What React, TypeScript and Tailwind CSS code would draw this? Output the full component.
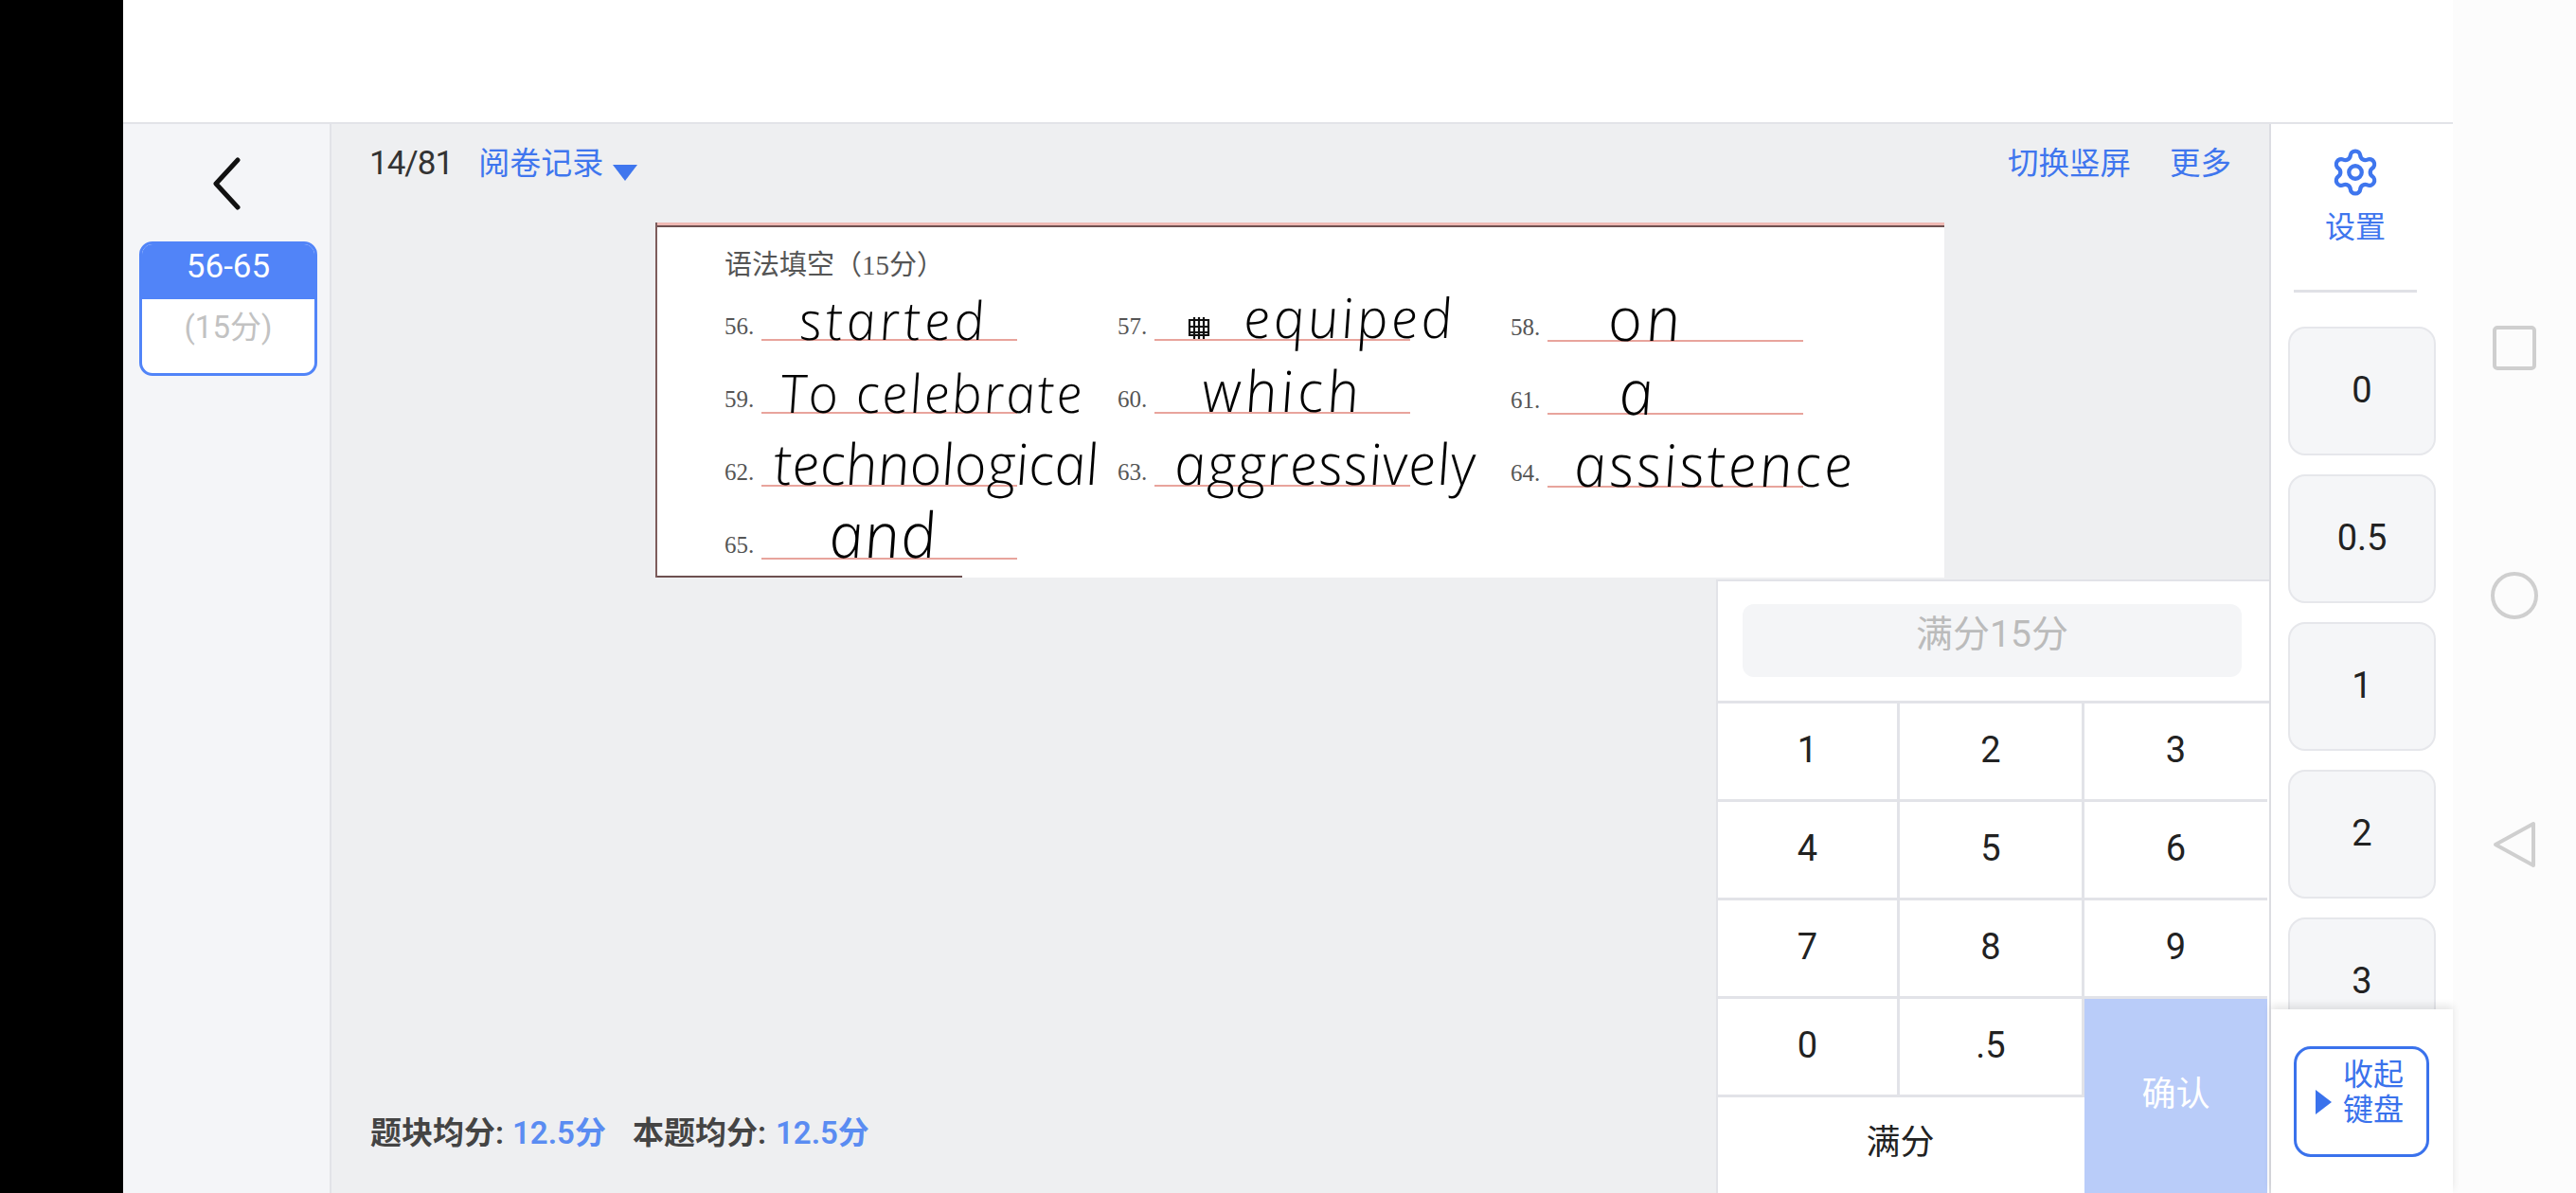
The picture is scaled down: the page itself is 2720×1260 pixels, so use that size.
import React from 'react';
import { Settings } from 'lucide-react';

const FONT = 'font-[Roboto,"Noto_Sans_CJK_SC",sans-serif]';
const INK = 'absolute whitespace-nowrap text-black font-light italic skew-x-[8deg] font-["Open_Sans",sans-serif]';

const answers = [
  { no: '56.', text: 'started', cls: 'left-[39px] bottom-[-7px] text-[56px] tracking-[4px]' },
  { no: '57.', text: 'equiped', cls: 'left-[93px] bottom-[-6px] text-[58px] tracking-[3px]', blot: true },
  { no: '58.', text: 'on', cls: 'left-[63px] bottom-[-9px] text-[64px] tracking-[4px]', tall: true },
  { no: '59.', text: 'To celebrate', cls: 'left-[19px] bottom-[-7px] text-[56px] tracking-[2px]' },
  { no: '60.', text: 'which', cls: 'left-[50px] bottom-[-7px] text-[60px] tracking-[4px]' },
  { no: '61.', text: 'a', cls: 'left-[74px] bottom-[-9px] text-[66px]', tall: true },
  { no: '62.', text: 'technological', cls: 'left-[12px] bottom-[-7px] text-[60px] tracking-[0px]' },
  { no: '63.', text: 'aggressively', cls: 'left-[20px] bottom-[-7px] text-[60px] tracking-[1px]' },
  { no: '64.', text: 'assistence', cls: 'left-[27px] bottom-[-8px] text-[62px] tracking-[2.5px]', tall: true },
  { no: '65.', text: 'and', cls: 'left-[70px] bottom-[-7px] text-[66px] tracking-[1px]' },
];

const keys = ['1', '2', '3', '4', '5', '6', '7', '8', '9'];
const quickScores = ['0', '0.5', '1', '2', '3'];

function App() {
  return (
    <div className={`flex h-[1260px] w-[2720px] overflow-hidden bg-white ${FONT}`}>
      <div className="w-[130px] shrink-0 bg-black" />

      <div className="flex w-[2460px] shrink-0 flex-col">
        <div className="h-[131px] shrink-0 border-b-2 border-[#e2e3e8] bg-white" />
        <div className="flex min-h-0 flex-1">
          {/* left question list */}
          <div className="flex w-[220px] shrink-0 flex-col items-center border-r-2 border-[#e2e3e8] bg-[#f4f5f8] pt-[35px]">
            <svg width="30" height="56" viewBox="0 0 30 56" className="mr-[1px]">
              <path d="M27 3 L4 28 L27 53" fill="none" stroke="#111" strokeWidth="5" strokeLinecap="round" strokeLinejoin="round" />
            </svg>
            <div className="mt-[33px] ml-[4px] h-[142px] w-[188px] overflow-hidden rounded-[14px] border-[3px] border-[#5184f8] bg-white text-center">
              <div className="h-[58px] bg-[#5184f8] text-[35px] leading-[48px] text-white">56-65</div>
              <div className="mt-[6px] text-[33px] leading-[48px] text-[#c2c2c2]">(15分)</div>
            </div>
          </div>

          {/* main marking area */}
          <div className="relative flex min-w-0 flex-1 flex-col bg-[#eeeff1]">
            <div className="flex h-[104px] shrink-0 items-start justify-between pr-[40px] pl-[40px] pt-[22px]">
              <div className="flex items-center text-[33px] leading-[40px]">
                <span className="text-[35px] tracking-[-1px] text-[#333]">14/81</span>
                <span className="ml-[27px] text-[#3f76ee]">阅卷记录</span>
                <svg width="26" height="18" viewBox="0 0 26 18" className="mt-[18px] ml-[10px]">
                  <path d="M0 1 H26 L13 18 Z" fill="#3f76ee" />
                </svg>
              </div>
              <div className="flex gap-[41px] text-[32.5px] leading-[40px] text-[#3f76ee]">
                <span>切换竖屏</span>
                <span>更多</span>
              </div>
            </div>

            {/* scanned answer sheet */}
            <div className="relative ml-[342px] h-[375px] w-[1361px] shrink-0 border-l-2 border-[#7d5c5c] bg-white pl-[71px]">
              <div className="absolute top-0 right-0 left-0 h-[3px] bg-[#efb9b4]" />
              <div className="absolute top-[3px] right-0 left-0 h-[2px] bg-[#6d5050]" />
              <div className="absolute bottom-0 left-0 h-[2px] w-[322px] bg-[#6d5050]" />
              <div className="pt-[28px] font-['Liberation_Serif','Noto_Sans_CJK_SC',serif] text-[29px] leading-[34px] text-[#555]">
                语法填空（15分）
              </div>
              <div className="mt-[-14px] grid grid-cols-[415px_415px_415px] auto-rows-[77px]">
                {answers.map((a) => (
                  <div key={a.no} className={`flex items-end ${a.tall ? 'h-[78px]' : 'h-[77px]'}`}>
                    <span className="w-[39px] shrink-0 font-['Liberation_Serif',serif] text-[25px] leading-[30px] text-[#555]">{a.no}</span>
                    <span className="relative block h-[40px] w-[270px] border-b-[2px] border-[#e8a49c]">
                      {a.blot && (
                        <svg width="28" height="28" viewBox="0 0 28 28" className="absolute bottom-[-2px] left-[33px]">
                          <path d="M4 6 H24 V22 H4 Z M9 3 V26 M14 3 V26 M19 3 V26 M3 13 H25 M3 19 H25" fill="none" stroke="#111" strokeWidth="2.2" />
                        </svg>
                      )}
                      <span className={`${INK} ${a.cls} leading-none`}>{a.text}</span>
                    </span>
                  </div>
                ))}
              </div>
            </div>

            <div className="mt-auto mb-[43px] flex pl-[41px] text-[33px] leading-[40px] font-semibold text-[#444]">
              <span>题块均分:</span>
              <span className="ml-[9px] text-[#5a8cf2]">12.5分</span>
              <span className="ml-[28px]">本题均分:</span>
              <span className="ml-[10px] text-[#5a8cf2]">12.5分</span>
            </div>

            {/* number pad */}
            <div className="absolute right-0 bottom-0 flex h-[648px] w-[584px] flex-col border-t-2 border-l-2 border-[#e2e3e8] bg-white">
              <div className="flex h-[129px] shrink-0 items-start border-b-[3px] border-[#e2e3e8] pr-[29px] pl-[26px] pt-[24px]">
                <div className="h-[77px] w-full rounded-[12px] bg-[#f4f5f7] pt-[12px] text-center text-[39px] leading-[40px] text-[#bbbbbb]">满分15分</div>
              </div>
              <div className="grid flex-1 grid-cols-[192px_195px_193px] grid-rows-[104px_104px_104px_104px_1fr]">
                {keys.map((k, i) => (
                  <div key={k} className={`flex items-center justify-center border-b-[3px] pb-[2px] text-[38px] text-[#222] border-[#e2e3e8] ${i % 3 === 2 ? '' : 'border-r-[3px]'}`}>
                    {k}
                  </div>
                ))}
                <div className="flex items-center justify-center border-r-[3px] border-b-[3px] border-[#e2e3e8] pb-[2px] text-[38px] text-[#222]">0</div>
                <div className="flex items-center justify-center border-r-[3px] border-b-[3px] border-[#e2e3e8] pb-[2px] text-[38px] text-[#222]">.5</div>
                <div className="row-span-2 flex items-center justify-center bg-[#b9ccf9] pb-[4px] text-[36px] text-white">确认</div>
                <div className="col-span-2 flex items-center justify-center pb-[6px] pr-[2px] text-[36px] text-[#222]">满分</div>
              </div>
            </div>
          </div>

          {/* quick score column */}
          <div className="flex w-[194px] shrink-0 flex-col border-l-2 border-[#dcdde2] bg-white">
            <div className="min-h-0 flex-1 overflow-hidden">
              <div className="flex flex-col items-center pt-[24px] pr-[14px]">
                <Settings size={54} color="#3f76ee" strokeWidth={1.9} />
                <div className="mt-[11px] text-[32px] leading-[40px] text-[#3f76ee]">设置</div>
                <div className="mt-[46px] h-[3px] w-[130px] bg-[#e0e1e6]" />
              </div>
              <div className="mt-[36px] ml-[18px] flex flex-col gap-[20px]">
                {quickScores.map((s) => (
                  <div key={s} className="flex h-[136px] w-[156px] shrink-0 items-center justify-center rounded-[18px] border-2 border-[#e6e7eb] bg-[#f5f6f8] pb-[2px] text-[38px] text-[#222]">
                    {s}
                  </div>
                ))}
              </div>
            </div>
            <div className="relative h-[194px] shrink-0 bg-white px-[24px] pt-[39px] shadow-[0_-4px_8px_rgba(0,0,0,0.1)]">
              <div className="flex h-[117px] w-[143px] rounded-[18px] border-[3px] border-[#3a72ec] pt-[9px] pl-[20px]">
                <svg width="17" height="26" viewBox="0 0 17 26" className="mt-[34px] shrink-0">
                  <path d="M0 0 L17 13 L0 26 Z" fill="#3a72ec" />
                </svg>
                <div className="ml-[12px] text-[32px] leading-[37px] text-[#3a72ec]">
                  <div>收起</div>
                  <div>键盘</div>
                </div>
              </div>
            </div>
          </div>
        </div>
      </div>

      {/* android nav bar */}
      <div className="flex w-[130px] shrink-0 flex-col items-center gap-[194px] bg-[#fcfcfc] pt-[344px]">
        <svg width="46" height="47" viewBox="0 0 46 47">
          <rect x="2" y="2" width="42" height="43" rx="3" fill="none" stroke="#cfcfcf" strokeWidth="4" />
        </svg>
        <svg width="50" height="50" viewBox="0 0 50 50" className="mt-[19px]">
          <circle cx="25" cy="25" r="23" fill="none" stroke="#cfcfcf" strokeWidth="4" />
        </svg>
        <svg width="46" height="50" viewBox="0 0 46 50" className="mt-[19px]">
          <path d="M43 3 V47 L3 25 Z" fill="none" stroke="#cfcfcf" strokeWidth="4" strokeLinejoin="round" />
        </svg>
      </div>
    </div>
  );
}

export default App;
